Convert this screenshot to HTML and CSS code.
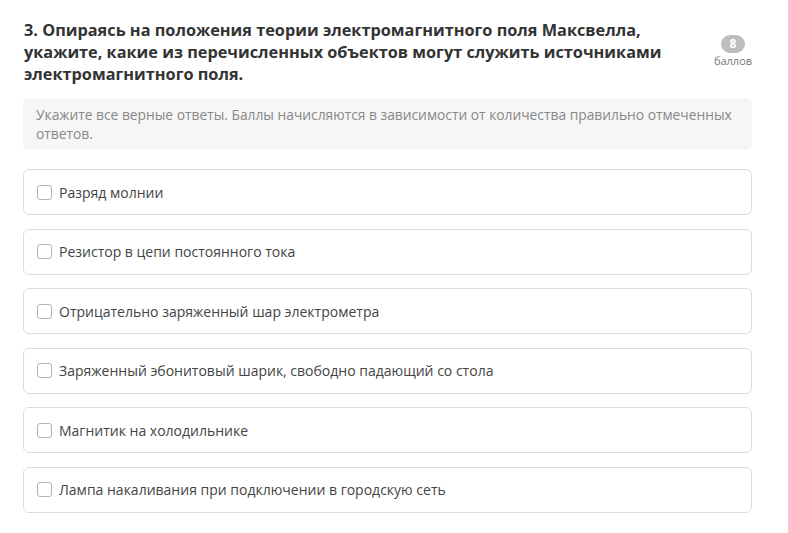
FILE: index.html
```html
<!DOCTYPE html>
<html lang="ru">
<head>
<meta charset="utf-8">
<link rel="stylesheet" href="styles.css">
</head>
<body>
<div class="task">
  <div class="task-head">
    <h2 class="task-title">3. Опираясь на положения теории электромагнитного поля Максвелла, укажите, какие из перечисленных объектов могут служить источниками электромагнитного поля.</h2>
    <div class="score">
      <span class="score-num">8</span>
      <span class="score-label">баллов</span>
    </div>
  </div>
  <div class="hint">Укажите все верные ответы. Баллы начисляются в зависимости от количества правильно отмеченных ответов.</div>
  <ul class="options">
    <li class="option"><span class="check"></span><span>Разряд молнии</span></li>
    <li class="option"><span class="check"></span><span>Резистор в цепи постоянного тока</span></li>
    <li class="option"><span class="check"></span><span>Отрицательно заряженный шар электрометра</span></li>
    <li class="option"><span class="check"></span><span>Заряженный эбонитовый шарик, свободно падающий со стола</span></li>
    <li class="option"><span class="check"></span><span>Магнитик на холодильнике</span></li>
    <li class="option"><span class="check"></span><span>Лампа накаливания при подключении в городскую сеть</span></li>
  </ul>
</div>
</body>
</html>
```

FILE: styles.css
```css
* { box-sizing: border-box; }
body {
  margin: 0;
  background: #fff;
  font-family: "Open Sans", "Noto Sans", sans-serif;
  color: #333;
}
.task {
  width: 752px;
  padding: 19px 0 0 23px;
}
.task-head {
  display: flex;
  align-items: flex-start;
}
.task-title {
  flex: 1;
  margin: 0;
  padding-left: 1px;
  font-size: 16.3px;
  line-height: 22px;
  font-weight: 700;
  color: #333;
}
.score {
  width: 60px;
  margin-top: 16px;
  display: flex;
  flex-direction: column;
  align-items: center;
  padding-left: 22px;
}
.score-num {
  width: 24px;
  height: 18px;
  border-radius: 9px;
  background: #bdbdbd;
  color: #fff;
  font-size: 12px;
  font-weight: 700;
  line-height: 18px;
  text-align: center;
}
.score-label {
  font-size: 11px;
  line-height: 14px;
  color: #777;
  margin-top: 1px;
}
.hint {
  margin-top: 13px;
  background: #f6f6f6;
  border-radius: 6px;
  padding: 7px 6px 7px 13px;
  font-size: 13.8px;
  line-height: 19px;
  color: #888;
}
.options {
  list-style: none;
  margin: 19px 0 0;
  padding: 0;
  display: flex;
  flex-direction: column;
  gap: 13.6px;
}
.option {
  height: 46px;
  border: 1px solid #dcdcdc;
  border-radius: 6px;
  display: flex;
  align-items: center;
  padding-left: 13px;
  gap: 7px;
  font-size: 14px;
  color: #444;
}
.check {
  width: 15px;
  height: 15px;
  border: 1px solid #b3b3b3;
  border-radius: 3px;
  flex: none;
}
```
